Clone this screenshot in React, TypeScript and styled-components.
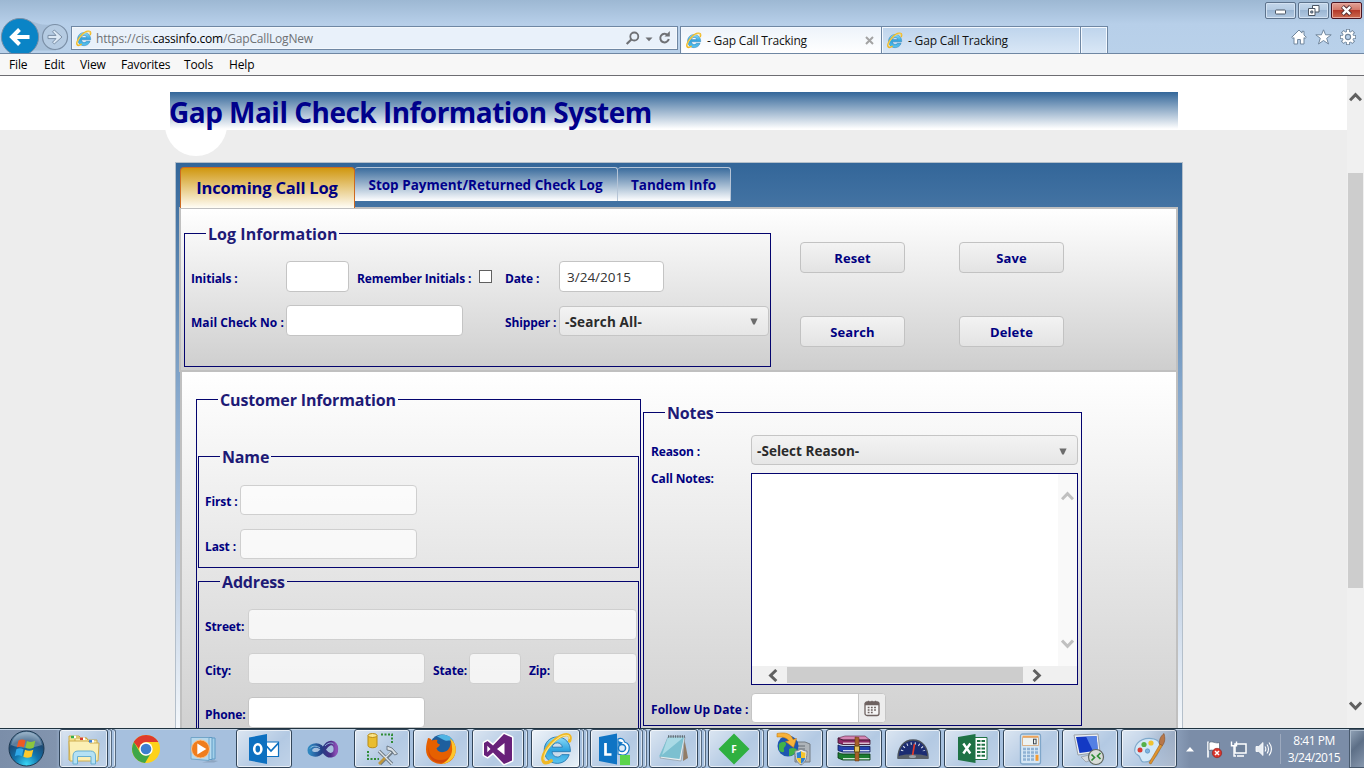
import React from "react";
import styled, { createGlobalStyle, css } from "styled-components";

const navy = "#000080";
const line = "#04046e";

const GlobalStyle = createGlobalStyle`
  *, *::before, *::after { box-sizing: border-box; }
  html, body { margin: 0; padding: 0; }
  body { font-family: "Open Sans", "Noto Sans", sans-serif; overflow: hidden; }
  svg { display: block; flex: none; }
  button, input { font-family: inherit; margin: 0; }
`;

/* ---------- window ---------- */

const Screen = styled.div`
  width: 1364px;
  height: 768px;
  display: flex;
  flex-direction: column;
  overflow: hidden;
  background: #fff;
`;

const Chrome = styled.header`
  position: relative;
  flex: none;
  height: 54px;
  display: flex;
  align-items: flex-end;
  border-bottom: 1px solid #6f87a3;
  background: linear-gradient(#9db8d3 0, #b7cfe9 24px, #b9d1ea 100%);
`;

const NavButtons = styled.div`
  width: 71px;
  height: 35px;
  flex: none;
`;

const AddressBar = styled.div`
  width: 607px;
  height: 24px;
  margin: 0 2px 3px 0;
  padding: 0 6px 0 3px;
  display: flex;
  align-items: center;
  border: 1px solid #6f87a3;
  background: #e9f1fa;
  box-shadow: inset 0 0 0 1px #f4f8fc;
`;

const Url = styled.span`
  flex: 1;
  margin-left: 4px;
  padding-top: 1px;
  font-size: 12px;
  letter-spacing: -0.18px;
  color: #6d7073;
  white-space: nowrap;
  b { font-weight: 400; color: #000; }
`;

const BrowserTab = styled.div<{ $active?: boolean; $w: number }>`
  width: ${(p) => p.$w}px;
  height: 27px;
  padding: 0 7px 0 4px;
  display: flex;
  align-items: center;
  gap: 5px;
  border: 1px solid #6f87a3;
  border-bottom: 0;
  margin-right: -1px;
  font-size: 12px;
  color: #111;
  white-space: nowrap;
  box-shadow: inset 1px 1px 0 #f4f9ff, inset -1px 0 0 #f4f9ff;
  background: ${(p) => (p.$active ? "linear-gradient(#edf3fa, #fff)" : "linear-gradient(#bed4ec, #d9e7f6)")};
  span { flex: 1; padding-top: 1px; letter-spacing: -0.18px; }
`;

const WindowControls = styled.div`
  position: absolute;
  right: 2px;
  top: 2px;
  display: flex;
  gap: 2px;
`;

const ControlButton = styled.div<{ $close?: boolean }>`
  width: 31px;
  height: 17px;
  display: grid;
  place-items: center;
  border: 1px solid ${(p) => (p.$close ? "#4a1420" : "#5d738c")};
  border-radius: 2px;
  box-shadow: inset 0 0 0 1px ${(p) => (p.$close ? "#e8aaa0" : "#d3e2f2")};
  background: ${(p) =>
    p.$close
      ? "linear-gradient(#e2a397 0, #d3796a 45%, #b5392a 50%, #cc6a50 100%)"
      : "linear-gradient(#c3d6ea 0, #b4cbe3 45%, #9bb6d3 50%, #b3cae2 100%)"};
`;

const ToolIcons = styled.div`
  position: absolute;
  right: 8px;
  top: 29px;
  display: flex;
  gap: 8px;
`;

const MenuBar = styled.nav`
  flex: none;
  height: 22px;
  padding: 1px 0 0 9px;
  display: flex;
  align-items: center;
  border-bottom: 1px solid #6d6d72;
  background: #f7f7f7;
`;

const MenuItem = styled.span<{ $w: number }>`
  width: ${(p) => p.$w}px;
  font-size: 12px;
  line-height: 18px;
  letter-spacing: -0.15px;
  color: #000;
  white-space: nowrap;
`;

const Viewport = styled.div`
  flex: 1;
  min-height: 0;
  display: flex;
`;

const Page = styled.main`
  width: 1347px;
  height: 652px;
  overflow: hidden;
  background: #ededed;
`;

const PageScroll = styled.div`
  width: 17px;
  padding: 15px 0 0;
  display: flex;
  flex-direction: column;
  align-items: center;
  background: #f0f0f0;
`;

const ScrollThumb = styled.div`
  width: 15px;
  height: 415px;
  flex: none;
  margin: 69px 0 111px;
  background: #cdcdcd;
`;

/* ---------- page ---------- */

const Banner = styled.div`
  position: relative;
  height: 54px;
  padding: 16px 0 0 170px;
  background: #fff;
  &::after {
    content: "";
    position: absolute;
    left: 165px;
    top: 18px;
    width: 62px;
    height: 62px;
    border-radius: 50%;
    background: #fff;
    clip-path: inset(36px 0 0 0);
  }
`;

const BannerTitle = styled.h1`
  width: 1008px;
  height: 37px;
  margin: 0;
  font-size: 28px;
  line-height: 41px;
  font-weight: 700;
  letter-spacing: -0.52px;
  text-indent: -1px;
  white-space: nowrap;
  color: #00008b;
  background: linear-gradient(#336699, #fff);
`;

const Shell = styled.div`
  width: 1008px;
  height: 640px;
  margin: 32px 0 0 175px;
  padding: 4px 4px 0 3px;
  border: 1px solid #b4bfca;
  background: linear-gradient(#336699 0, #4272a2 40px, #85a7cb 225px, #bccde3 400px, #f2f6fa 560px, #fff 600px);
`;

const TabStrip = styled.div`
  position: relative;
  z-index: 1;
  display: flex;
  align-items: flex-start;
  height: 40px;
  padding-left: 1px;
`;

const Tab = styled.div<{ $active?: boolean; $w: number }>`
  width: ${(p) => p.$w}px;
  height: 34px;
  padding-right: 1px;
  text-align: center;
  white-space: nowrap;
  font-weight: 700;
  font-size: 13.5px;
  line-height: 34px;
  color: #00008b;
  border: 1px solid #b5c4d6;
  border-left: 0;
  border-bottom: 0;
  border-radius: 3px 3px 0 0;
  background: linear-gradient(#3b6c9d, #fff);
  ${(p) =>
    p.$active &&
    css`
      height: 41px;
      line-height: 39px;
      font-size: 16.5px;
      letter-spacing: -0.18px;
      color: ${navy};
      border: 1px solid #cd6a20;
      border-bottom: 0;
      border-radius: 4px 4px 0 0;
      background: linear-gradient(#d0970f, #fffdf6);
    `}
`;

const LogPane = styled.section`
  height: 165px;
  padding: 12px 0 0 3px;
  display: flex;
  align-items: flex-start;
  border: 2px solid #c0c0c0;
  background: linear-gradient(#ffffff, #cecece);
`;

const DetailPane = styled.section`
  height: 420px;
  margin-left: 1px;
  padding: 15px 0 0 14px;
  display: flex;
  align-items: flex-start;
  border: solid #c0c0c0;
  border-width: 0 2px;
  background: linear-gradient(#ffffff, #cfcfcf 370px);
`;

const Group = styled.fieldset<{ $w: number; $h: number; $mt?: number }>`
  width: ${(p) => p.$w}px;
  height: ${(p) => p.$h}px;
  min-width: 0;
  margin: ${(p) => p.$mt || 0}px 0 0;
  padding: 0;
  border: 1px solid ${line};
`;

const Legend = styled.legend<{ $w: number; $ls?: number }>`
  width: ${(p) => p.$w}px;
  height: 25px;
  margin-left: 21px;
  padding: 0 2px;
  font-size: 16px;
  line-height: 26px;
  font-weight: 700;
  letter-spacing: ${(p) => p.$ls ?? -0.15}px;
  white-space: nowrap;
  color: #1e1a76;
`;

const Row = styled.div<{ $mt: number; $pl?: number }>`
  display: flex;
  align-items: center;
  margin-top: ${(p) => p.$mt}px;
  padding-left: ${(p) => p.$pl ?? 6}px;
`;

const Label = styled.label<{ $w: number; $up?: boolean; $ls?: number; $pt?: number }>`
  width: ${(p) => p.$w}px;
  flex: none;
  padding-top: ${(p) => p.$pt ?? 4}px;
  margin-top: ${(p) => (p.$up ? -6 : 0)}px;
  align-self: ${(p) => (p.$up ? "flex-start" : "center")};
  font-size: 12px;
  line-height: 16px;
  font-weight: 700;
  letter-spacing: ${(p) => p.$ls ?? -0.13}px;
  white-space: nowrap;
  color: ${navy};
`;

const TextBox = styled.div<{ $w: number; $mr?: number; $off?: boolean; $h?: number }>`
  width: ${(p) => p.$w}px;
  height: ${(p) => p.$h || 31}px;
  flex: none;
  margin-right: ${(p) => p.$mr || 0}px;
  padding: 0 7px;
  border: 1px solid ${(p) => (p.$off ? "#cfcfcf" : "#c4c4c4")};
  border-radius: 4px;
  background: ${(p) => (p.$off ? "rgba(255,255,255,.72)" : "#fff")};
  font-size: 13.5px;
  line-height: 30px;
  color: #333;
`;

const CheckBox = styled.div`
  width: 13px;
  height: 13px;
  margin-right: 13px;
  border: 1px solid #606060;
  background: #fff;
`;

const Select = styled.div<{ $w: number; $ls?: number }>`
  width: ${(p) => p.$w}px;
  height: 30px;
  padding: 2px 10px 0 5px;
  display: flex;
  align-items: center;
  justify-content: space-between;
  border: 1px solid #c5c5c5;
  border-radius: 4px;
  background: linear-gradient(#f3f3f3, #e6e6e6);
  font-size: 13.5px;
  font-weight: 700;
  letter-spacing: ${(p) => p.$ls ?? 0.05}px;
  color: #2a2a2a;
`;

const ButtonGrid = styled.div`
  display: grid;
  grid-template-columns: 105px 105px;
  gap: 43px 54px;
  margin: 21px 0 0 29px;
`;

const ActionButton = styled.button`
  height: 31px;
  padding: 1px 0 0;
  border: 1px solid #c2c2c2;
  border-radius: 4px;
  background: linear-gradient(#f3f3f3, #e3e3e3);
  font-size: 13px;
  letter-spacing: 0.1px;
  font-weight: 700;
  color: ${navy};
`;

const NotesArea = styled.div`
  width: 327px;
  height: 212px;
  display: grid;
  grid-template-columns: 1fr 19px;
  grid-template-rows: 1fr 18px;
  border: 1px solid ${line};
  background: #fff;
`;

const NotesVScroll = styled.div`
  display: flex;
  flex-direction: column;
  align-items: center;
  justify-content: space-between;
  padding: 16px 0;
  background: #f9f9f9;
`;

const NotesHScroll = styled.div`
  grid-column: 1 / 3;
  display: flex;
  align-items: center;
  gap: 7px;
  padding-left: 15px;
  background: #f0f0f0;
`;

const NotesThumb = styled.div`
  width: 236px;
  height: 16px;
  background: #cdcdcd;
`;

const DateField = styled.div`
  display: flex;
  width: 135px;
  height: 30px;
  border: 1px solid #c5c5c5;
  border-radius: 4px;
  overflow: hidden;
  background: #fff;
`;

const DateButton = styled.div`
  width: 27px;
  margin-left: auto;
  display: grid;
  place-items: center;
  border-left: 1px solid #c5c5c5;
  background: #ededed;
`;

/* ---------- taskbar ---------- */

const Taskbar = styled.footer`
  flex: none;
  height: 40px;
  display: flex;
  border-top: 1px solid #1f3340;
  box-shadow: inset 0 1px 0 #c3d4e6;
  background: linear-gradient(90deg, #7b8ea9 0, #8294ae 56px, #a6c0de 64px, #a6c0de 1140px, #8a9db8 1176px, #7b8da8 1190px, #7b8da8 100%);
`;

const StartCell = styled.div`
  width: 59px;
  flex: none;
  padding-left: 8px;
`;

type CellKind = "plain" | "open" | "stack" | "pile" | "active";

const frontWidth: Record<CellKind, number> = { plain: 56, open: 56, stack: 52, pile: 49, active: 49 };
const edgeCount: Record<CellKind, number> = { plain: 0, open: 0, stack: 1, pile: 2, active: 2 };

const TaskCell = styled.div`
  width: 59px;
  height: 39px;
  flex: none;
  display: flex;
`;

const TaskButton = styled.div<{ $kind: CellKind }>`
  width: ${(p) => frontWidth[p.$kind]}px;
  height: 39px;
  display: grid;
  place-items: center;
  border: 1px solid transparent;
  border-radius: 3px;
  ${(p) =>
    p.$kind !== "plain" &&
    css`
      border-color: #33465a;
      box-shadow: inset 0 0 0 1px rgba(255, 255, 255, 0.65);
      background: linear-gradient(135deg, rgba(255, 255, 255, 0.6), rgba(255, 255, 255, 0.15) 60%, rgba(255, 255, 255, 0.3));
    `}
  ${(p) =>
    p.$kind === "active" &&
    css`
      background: linear-gradient(135deg, #eef4fa, #c9d9ea 55%, #e8f2f8);
    `}
`;

const StackEdge = styled.div`
  width: 4px;
  height: 39px;
  border: 1px solid #566a80;
  border-left: 0;
  border-radius: 0 3px 3px 0;
  box-shadow: inset -1px 0 0 rgba(255, 255, 255, 0.6);
`;

const Tray = styled.div`
  margin-left: 4px;
  padding-left: 2px;
  flex: 1;
  display: flex;
  align-items: center;
  color: #fff;
`;

const TrayDivider = styled.div`
  width: 1px;
  height: 30px;
  margin-left: 4px;
  background: rgba(255, 255, 255, 0.25);
`;

const Clock = styled.div`
  width: 66px;
  padding-top: 1px;
  font-size: 12px;
  line-height: 17px;
  letter-spacing: -0.5px;
  text-align: center;
  white-space: nowrap;
`;

const ShowDesktop = styled.div`
  width: 15px;
  height: 39px;
  flex: none;
  margin-left: auto;
  border: 1px solid #48596d;
  border-right: 0;
  box-shadow: inset 1px 1px 0 #a9b8c9;
  background: linear-gradient(135deg, #93a4b8, #5d6f87 45%, #8798ae);
`;

/* ---------- drawings ---------- */

const IeLogo = ({ size, id }: { size: number; id: string }) => (
  <svg width={size} height={size} viewBox="0 0 32 32">
    <defs>
      <linearGradient id={id} x1="0" y1="0" x2="0" y2="1">
        <stop offset="0" stopColor="#8ddcf8" />
        <stop offset=".5" stopColor="#2fa3de" />
        <stop offset="1" stopColor="#5cc4ee" />
      </linearGradient>
    </defs>
    <path
      d="M29.500 18.500H12.200c.3 3 2.300 5 5 5 1.900 0 3.300-.8 4.200-2.200h7c-1.600 5.200-6.200 8.200-11.300 8.200-7 0-12.200-5.200-12.200-12.300S10.100 4.700 17.100 4.700c7.300 0 12.800 5.400 12.400 13.800zM22 14.300c-.4-2.500-2.300-4.100-4.800-4.100s-4.400 1.600-4.900 4.100H22z"
      fill={`url(#${id})`}
      stroke="#2a7db4"
      strokeWidth=".9"
    />
    <path
      d="M28.800 8.500c1-3 .6-5-1.300-5.700-3.600-1.300-11 2.300-16.600 8.400C4.900 17.700 2 25.300 4.400 28.100c1.300 1.500 4 .9 7.100-1"
      fill="none"
      stroke="#f0b823"
      strokeWidth="3"
      strokeLinecap="round"
    />
    <path d="M28.400 6.500c.4-1.800 0-2.700-1.100-3.100-3.400-1.200-9.500 2-15 7.500-5 5.300-8 11-7.600 15" fill="none" stroke="#fce78b" strokeWidth="1" />
  </svg>
);

const BackForward = () => (
  <svg width="71" height="35" viewBox="0 19 71 35">
    <path d="M20 19.500C32 20 36 27 50 25.500h6v26H20z" fill="#a2bad3" opacity=".75" />
    <circle cx="20" cy="38" r="18.600" fill="#0a84c6" stroke="#7890a8" strokeWidth="1" />
    <path d="M29.500 38H13M19.500 30.500 12 38l7.500 7.500" fill="none" stroke="#fff" strokeWidth="4" />
    <circle cx="55" cy="38" r="12.500" fill="#b5cbe2" stroke="#7b8fa6" strokeWidth="1.200" />
    <path
      d="M48 36.400h8l-3.500-3.600 1.800-1.800L62 38l-7.700 7-1.800-1.800 3.500-3.600h-8z"
      fill="#dce8f4"
      stroke="#7b8fa6"
      strokeWidth="1"
    />
  </svg>
);

const AddressTools = () => (
  <svg width="46" height="18" viewBox="0 0 46 18">
    <circle cx="9.300" cy="7.500" r="4" fill="none" stroke="#6f7175" strokeWidth="1.800" />
    <path d="M6.300 10.500 1.700 15" stroke="#6f7175" strokeWidth="2.200" />
    <path d="M20.500 8.500h7L24 12.300z" fill="#6f7175" />
    <path d="M42.800 6.200A4.300 4.300 0 1 0 43.800 10" fill="none" stroke="#6f7175" strokeWidth="2" />
    <path d="M39.500 7.400h5.300V2z" fill="#6f7175" />
  </svg>
);

const HomeStarGear = () => (
  <ToolIcons>
    <svg width="16" height="16" viewBox="0 0 16 16">
      <path
        d="M8 1 .7 8.300l1.300 1.200 1-.9V15h3.600v-4.500h2.800V15H13V8.600l1 .9 1.300-1.200-2.300-2.300V2.300h-2v1.800z"
        fill="#fff"
        stroke="#70869d"
        strokeWidth="1"
      />
    </svg>
    <svg width="17" height="16" viewBox="0 0 17 16">
      <path
        d="m8.500.8 2.100 5h5.600L11.700 9.300l1.800 5.700-5-3.500-5 3.500 1.800-5.700L.8 5.800h5.600z"
        fill="#fff"
        stroke="#70869d"
        strokeWidth="1"
      />
    </svg>
    <svg width="16" height="16" viewBox="0 0 16 16">
      <g stroke="#70869d" strokeWidth="4">
        <path d="M8 0v16M0 8h16M2.300 2.300l11.400 11.400M13.700 2.300 2.300 13.700" />
      </g>
      <circle cx="8" cy="8" r="5.900" fill="#70869d" />
      <g stroke="#fff" strokeWidth="2.300">
        <path d="M8 .8v14.400M.8 8h14.400M2.900 2.900l10.200 10.200M13.100 2.900 2.900 13.100" />
      </g>
      <circle cx="8" cy="8" r="5.200" fill="#fff" />
      <circle cx="8" cy="8" r="2.600" fill="#b9d1ea" stroke="#70869d" strokeWidth="1.100" />
    </svg>
  </ToolIcons>
);

const Chevron = ({ dir, color = "#606060" }: { dir: "up" | "down" | "left" | "right"; color?: string }) => {
  const paths = {
    up: "M1 9.300 6.500 3.600 12 9.300",
    down: "M1 3.600 6.500 9.300 12 3.600",
    left: "M9.300 1 3.600 6.500 9.300 12",
    right: "M3.600 1 9.300 6.500 3.600 12",
  };
  return (
    <svg width="13" height="13" viewBox="0 0 13 13">
      <path d={paths[dir]} fill="none" stroke={color} strokeWidth="3" />
    </svg>
  );
};

const SelectArrow = () => (
  <svg width="8" height="7" viewBox="0 0 8 7">
    <path d="M.4.500h7.200L4.800 6.500H3.200z" fill="#6c6c6c" />
  </svg>
);

const CalendarIcon = () => (
  <svg width="16" height="17" viewBox="0 0 16 17">
    <path d="M3 2h10a2 2 0 0 1 2 2v9.500a2 2 0 0 1-2 2H3a2 2 0 0 1-2-2V4a2 2 0 0 1 2-2z" fill="#f5f5f5" stroke="#6e6260" strokeWidth="1.300" />
    <path d="M1 5.200h14V3.500L13.500 2h-11L1 3.500z" fill="#6e6260" />
    <path d="M4.500.7v2.600M8 .7v2.600M11.500.7v2.600" stroke="#6e6260" strokeWidth="1.300" />
    <path d="M3.700 7.500h9M3.700 10h9M3.700 12.500h6" stroke="#6e6260" strokeWidth="1.600" strokeDasharray="1.800 1.400" />
  </svg>
);

const StartOrb = () => (
  <svg width="37" height="38" viewBox="0 0 37 38">
    <defs>
      <radialGradient id="orb" cx=".5" cy=".95" r=".9">
        <stop offset="0" stopColor="#39d6f5" />
        <stop offset=".4" stopColor="#1274ad" />
        <stop offset=".75" stopColor="#1c4a75" />
        <stop offset="1" stopColor="#6f92b0" />
      </radialGradient>
    </defs>
    <circle cx="18.500" cy="19.500" r="17.500" fill="url(#orb)" stroke="#1d3850" strokeWidth="1" />
    <path d="M3 16C5 8 11 3 18.500 3S32 8 34 16c-8 3-22 4-31 0z" fill="#fff" opacity=".28" />
    <path d="M10.500 11.500c2.300-1.300 4.700-1.400 7-.1l-1.600 7c-2.400-1.300-4.800-1.200-7.100 0z" fill="#ee5a24" />
    <path d="M19 12c2.700 1.200 5.300 1.200 8.300-.2l-1.700 7c-2.900 1.300-5.500 1.300-8.200 0z" fill="#8cc63e" />
    <path d="M8.400 20.200c2.300-1.200 4.700-1.200 7.100.1l-1.700 7c-2.300-1.300-4.600-1.300-7-.1z" fill="#2fa8e8" />
    <path d="M17 20.800c2.800 1.300 5.400 1.300 8.300 0l-1.700 7c-2.900 1.300-5.600 1.300-8.300-.1z" fill="#fdc92c" />
  </svg>
);

const ExplorerIcon = () => (
  <svg width="34" height="32" viewBox="0 0 34 32">
    <path d="M2 3h10l2 2h6v22H2z" fill="#f6e089" stroke="#c9a94a" />
    <path d="M8 5h11l2 2h9v20H8z" fill="#f9e9a2" stroke="#c9a94a" />
    <path d="M2 8h19l2 2h9l-1 18H3z" fill="#fbefb4" stroke="#cfae50" />
    <path d="M4 4h5M13 5.800h5M22 8.300h5" stroke="#fff" strokeWidth="2.500" />
    <path d="M4 4h3" stroke="#35b04a" strokeWidth="2.500" />
    <path d="M13 5.800h3" stroke="#d63b2d" strokeWidth="2.500" />
    <path d="M22 8.300h3" stroke="#3a7fd0" strokeWidth="2.500" />
    <path d="M6 31v-8c0-3.500 2-5 5-5h12.500c3 0 5 1.500 5 5v8H24v-7.500H10.500V31z" fill="#b4e1f4" stroke="#66aed1" />
  </svg>
);

const ChromeIcon = () => (
  <svg width="30" height="30" viewBox="0 0 30 30">
    <circle cx="15" cy="15" r="14" fill="#fdd21b" />
    <path d="M2.900 8A14 14 0 0 1 27.200 8H15a7 7 0 0 0-6.500 4.700z" fill="#df3b2c" />
    <path d="M2.900 8A14 14 0 0 0 14 29l6.100-10.200A7 7 0 0 1 9 18.500z" fill="#3fa648" />
    <path d="M2.900 8c3-5.500 18-9.500 24.300 0H15c-4 0-6.800 3.300-7 7z" fill="#df3b2c" />
    <circle cx="15" cy="15" r="6.700" fill="#fff" />
    <circle cx="15" cy="15" r="5.300" fill="#3c7fcf" />
  </svg>
);

const MediaIcon = () => (
  <svg width="30" height="28" viewBox="0 0 30 28">
    <path d="m22 25 6 1-4 1.500H12z" fill="#7e95ad" opacity=".6" />
    <path d="M12 3h13v21H12z" fill="#a2d0ea" stroke="#5f9ac4" />
    <path d="M9 2.500h13v22H9z" fill="#b7dcf0" stroke="#5f9ac4" />
    <path d="M1 2.500h18v23L1 24z" fill="#b6d8ec" stroke="#72a5c8" />
    <circle cx="10.500" cy="14" r="9" fill="#f07d1c" stroke="#f9c088" />
    <path d="M7.300 8.500v11l9-5.500z" fill="#fff" />
  </svg>
);

const FiddlerLetter = styled.text`
  font-family: "Open Sans", sans-serif;
  font-weight: 700;
  fill: #fff;
`;

const OutlookIcon = () => (
  <svg width="32" height="32" viewBox="0 0 32 32">
    <path d="M17 9h13.500v14.500H17z" fill="#fff" stroke="#0d70c0" strokeWidth="1.200" />
    <path d="m17.500 12 5.500 6 7.500-8" fill="none" stroke="#0d70c0" strokeWidth="1.800" />
    <path d="M1 4.500 19 1v30L1 27.500z" fill="#0d70c0" />
    <ellipse cx="9.800" cy="16" rx="3.600" ry="4.700" fill="none" stroke="#fff" strokeWidth="2.600" />
  </svg>
);

const InfinityIcon = () => (
  <svg width="32" height="20" viewBox="0 0 32 20">
    <defs>
      <linearGradient id="inf">
        <stop offset="0" stopColor="#2f86bf" />
        <stop offset=".45" stopColor="#243f86" />
        <stop offset=".8" stopColor="#4a2c86" />
        <stop offset="1" stopColor="#8a4fb5" />
      </linearGradient>
    </defs>
    <path
      d="M13.500 8C9.500 5 2.800 7 2.800 11.300s7.200 6 11.700 1.200S20.500 3.500 24.500 4c5.500.8 6 10.500.5 12-3.500 1-6-1.500-7.500-3.500"
      fill="none"
      stroke="url(#inf)"
      strokeWidth="4.600"
      strokeLinecap="round"
    />
    <path d="M3 9.500C5 6.500 10 6.500 13 9M18 7c2-2.500 6-4.200 8.500-2" fill="none" stroke="#9fd0ee" strokeWidth=".8" />
  </svg>
);

const SqlIcon = () => (
  <svg width="32" height="33" viewBox="0 0 32 33">
    <path d="M2 3.500v10c0 3 9 3 9 0v-10z" fill="#e9bd2f" stroke="#b98b13" />
    <ellipse cx="6.500" cy="3.500" rx="4.500" ry="2" fill="#fbe58a" stroke="#b98b13" />
    <path d="M15 2.500h11v10M2 19v8h11" fill="none" stroke="#2f8c35" strokeWidth="2" strokeDasharray="2 1.500" />
    <path d="m13 19 13 13M27 19 14 32" stroke="#6f7c87" strokeWidth="3.400" />
    <path d="m13 19 13 13M25 20 14 31" stroke="#dfe5ea" strokeWidth="1.400" />
    <path d="m21 14 5 2 5.500 6-3 1-3-4-4.500-1z" fill="#dbe1e6" stroke="#59646e" strokeWidth=".8" />
    <path d="m13 32 6-6" stroke="#c0973b" strokeWidth="2.600" />
  </svg>
);

const FirefoxIcon = () => (
  <svg width="32" height="32" viewBox="0 0 32 32">
    <circle cx="17" cy="14" r="12.500" fill="#1e5f9e" />
    <path d="M12 3.500c6-4 14-1 17 5-4-2-6 0-9-1s-5-3-8-4z" fill="#4fb4e4" />
    <path
      d="M3 5c2 0 3 1 4 2.500C9 6.500 11 6.500 12.500 7c-1 2-.5 3.500 2.500 4.500-.5 2-2.500 2.500-3.500 4 1.500 4 6.500 4.500 10 2.500 4-2.300 5-9 3.500-12.500 5 3.500 6.500 9 5.500 14C29 27 23 31 16 31 7.500 31 1 24.500 1 16.500 1 12 2 9 3 5z"
      fill="#e66000"
    />
    <path d="M25 5.500c5 3.500 6.500 9 5.500 14C29 26 24 30 17 31c7-4 11-10 10-17 0-3-1-6-2-8.500z" fill="#fcc62d" />
    <path d="M4 14c-1 7 4 13 11 13 4 0 7-1 9-3-2 5-8 7-13 5C5 27 2 20 4 14z" fill="#c7380f" opacity=".6" />
  </svg>
);

const VisualStudioIcon = () => (
  <svg width="34" height="34" viewBox="0 0 34 34">
    <path d="m3 11 3.500-2 5.500 4.500L23 2l8 3.500v23L23 32 12 20.500 6.500 25 3 23z" fill="#68217a" stroke="#fff" strokeWidth="3" strokeLinejoin="round" paintOrder="stroke" />
    <path d="m6.300 13.800 3.200 3.200-3.200 3.200zM23.500 11v12L16 17z" fill="#fff" />
  </svg>
);

const LyncIcon = () => (
  <svg width="33" height="34" viewBox="0 0 33 34">
    <path d="M20 7c3-1.500 6 0 6.500 3 4 1 5.500 4.500 4.500 8s-4 5.500-7 5l-4-1z" fill="#fff" stroke="#1578c5" strokeWidth="1.200" />
    <circle cx="24" cy="16" r="3.600" fill="#dcebf8" stroke="#1578c5" strokeWidth="1.500" />
    <path d="m20 9 5 1.500-4 4z" fill="#1578c5" />
    <path d="M1 5 19 1.500v31L1 29z" fill="#0f74c4" />
    <path d="M7.500 11v11.500h6" fill="none" stroke="#fff" strokeWidth="2.700" />
    <path d="M22 23h10v10H22z" fill="#5bd44c" />
  </svg>
);

const NotepadIcon = () => (
  <svg width="34" height="32" viewBox="0 0 34 32">
    <path d="m27 4 4 21-5 3z" fill="#927c66" />
    <path d="M11 4h17l-4 24-21-3z" fill="#e9eef0" stroke="#8c9aa3" strokeWidth=".7" />
    <path d="M11 4h16l-4.500 22L2 23.500z" fill="#7cc0d0" />
    <path d="M11 4h16L5 22z" fill="#bde6ee" opacity=".7" />
    <path d="M11 3.500h17" stroke="#5f6c74" strokeWidth="2.500" strokeDasharray="1.300 1" />
  </svg>
);

const FiddlerIcon = () => (
  <svg width="34" height="34" viewBox="0 0 34 34">
    <path d="m17 1.500 15.500 15.500L17 32.500 1.500 17z" fill="#2fb040" />
    <FiddlerLetter x="14.200" y="20.500" fontSize="10">F</FiddlerLetter>
  </svg>
);

const ServerShieldIcon = () => (
  <svg width="40" height="34" viewBox="0 0 40 34">
    <path d="M20 10h10l5 2v18H20z" fill="#aeb4b9" stroke="#747c83" />
    <path d="M22 14h8M22 17h8M22 20h8" stroke="#656d74" />
    <circle cx="13" cy="14" r="10.500" fill="#1d56b0" />
    <path d="M4 12c3-3 7-3 7 0s-3 3-2 6-3 3-5 0zM14 17c3-2 7-1 8 1-2 4-5 6-8 6z" fill="#41b249" />
    <path d="M2 1.500c8-1.500 14 0 16 6l3.500-1-3 9-8-6 3.500-.8C12 6 8 4.500 2 5z" fill="#f7b23a" stroke="#c77c10" strokeWidth=".6" />
    <path d="M20 19c3 0 4-1 6-2 2 1 3 2 6 2 0 7-1 11-6 14-5-3-6-7-6-14z" fill="#e8e9eb" stroke="#7d8389" />
    <path d="M21.500 20.500c2 0 3-.5 4.500-1.500v7h-4.200zM26 26h4.200c-.6 3-2 4.500-4.200 5.700z" fill="#2e7fd0" />
    <path d="M30.500 20.500c-2 0-3-.5-4.500-1.500v7h4.200zM26 26h-4.200c.6 3 2 4.500 4.200 5.700z" fill="#f6c52c" />
  </svg>
);

const WinrarIcon = () => (
  <svg width="34" height="28" viewBox="0 0 34 28">
    <path d="M1 3 8 1h20l5 4H6z" fill="#d487b4" stroke="#5d1f42" strokeWidth=".6" />
    <path d="M1 3c2 1 3 1.500 5 2h27v4.500H6C4 9 2.500 8.500 1 8z" fill="#8d2a66" stroke="#3a1229" strokeWidth=".8" />
    <path d="M6 8.200h26.500" stroke="#efe6ec" strokeWidth="1.200" />
    <path d="M1 10c2 1 3 1 5 1.500h27V17H6c-2-.5-3.500-1-5-1.500z" fill="#2342ae" stroke="#0d1a50" strokeWidth=".8" />
    <path d="M6 15.700h26.500" stroke="#e6eaf6" strokeWidth="1.200" />
    <path d="M1 17.500c2 1 3 1.200 5 1.500h27v6H6c-2-.5-3.500-1.500-5-2z" fill="#1c7d30" stroke="#0a3312" strokeWidth=".8" />
    <path d="M6 23.700h26.500" stroke="#e2f0e4" strokeWidth="1.200" />
    <path d="m18 2 4 .5V26h-4z" fill="#a8622a" stroke="#5e3512" strokeWidth=".5" />
    <path d="M17.500 11h5v6h-5z" fill="#e2c15c" stroke="#5e4a14" />
  </svg>
);

const GaugeIcon = () => (
  <svg width="32" height="22" viewBox="0 0 32 22">
    <path d="M1 20C1 9 7 2 16 2s15 7 15 18z" fill="#1b2c72" stroke="#4a525c" strokeWidth="1.500" />
    <path d="M1 18.500c5-3 25-3 30 0V21H1z" fill="#59616a" />
    <path d="M5 13c2.500-10 19.500-10 22 0" fill="none" stroke="#dfe6f2" strokeWidth="2.500" strokeDasharray="1 3" />
    <path d="m15.500 18 2-12" stroke="#e83a2a" strokeWidth="1.600" />
    <ellipse cx="15.500" cy="18.500" rx="3.500" ry="1.500" fill="#98a0a8" />
  </svg>
);

const ExcelIcon = () => (
  <svg width="31" height="31" viewBox="0 0 31 31">
    <path d="M17 4.500h13v22H17z" fill="#fff" stroke="#1f7245" strokeWidth="1" />
    <path d="M20 8h8M20 11.700h8M20 15.400h8M20 19.100h8M20 22.800h8" stroke="#1f7245" strokeWidth="2" strokeDasharray="3.500 1" />
    <path d="M1 4 18.500 1v29L1 27z" fill="#1f7245" />
    <path d="m6.300 10.500 7 10M13.300 10.500l-7 10" stroke="#fff" strokeWidth="2.400" />
  </svg>
);

const CalcIcon = () => (
  <svg width="24" height="32" viewBox="0 0 24 32">
    <rect x="1.500" y="1" width="20" height="30" rx="2" fill="#d6e7f5" stroke="#7fa6c9" strokeWidth="1.300" />
    <path d="M3.500 3.500h16" stroke="#f2a558" strokeWidth="1.600" />
    <path d="M3.500 4.500h16v8h-16z" fill="#eef3f2" stroke="#d99a5a" strokeWidth=".7" />
    <rect x="14.500" y="6.200" width="2.600" height="4.600" fill="none" stroke="#3f4850" strokeWidth="1" />
    <path d="M4 16h15M4 19.500h15M4 23h11M4 26.500h11" stroke="#8fb2d4" strokeWidth="2.400" strokeDasharray="3 1" />
    <path d="M16.500 21.800h3v6h-3z" fill="#f39a31" />
  </svg>
);

const RemoteIcon = () => (
  <svg width="36" height="34" viewBox="0 0 36 34">
    <path d="m2 3 24-1 2 18-22 3z" fill="#eceff2" stroke="#99a1a9" />
    <path d="m4 5 20.500-1 1.500 14.500L7.500 21z" fill="#1339c4" />
    <path d="m14 4.500 10.500-.5 1.500 14.500-5 .5z" fill="#6f9ef2" opacity=".7" />
    <path d="m9 25 12-3 3 4-10 4z" fill="#d7dbe0" stroke="#8f979f" strokeWidth=".7" />
    <circle cx="24" cy="25" r="7.500" fill="#d9ddd9" stroke="#5f665f" strokeWidth="1.200" />
    <path d="m19.500 22.500 3 3-3 3M28.500 21l-3 3 3 3" fill="none" stroke="#2f8c35" strokeWidth="1.700" />
  </svg>
);

const PaintIcon = () => (
  <svg width="35" height="34" viewBox="0 0 35 34">
    <path d="M3 16C5 8 14 5 22 7c6 1.500 7 7 5 12-2 6-8 11-15 11-4 0-3-4-5-6S1.500 22 3 16z" fill="#d3e8f7" stroke="#7fa9cb" strokeWidth="1.200" />
    <circle cx="8" cy="18" r="2.500" fill="#d93c33" />
    <circle cx="12" cy="12.500" r="2.600" fill="#55b04a" />
    <circle cx="19" cy="11" r="2.600" fill="#f0c22f" />
    <circle cx="15.500" cy="19" r="2.200" fill="#7fb5e0" stroke="#4b86b8" strokeWidth=".6" />
    <path d="m17 31 11-19 2.500 1.500L19 32z" fill="#e0942d" stroke="#a5661b" strokeWidth=".6" />
    <path d="M27.500 12C27 7 29 4 32 1.500c1 4 1.500 8-1.500 12z" fill="#b7774a" stroke="#85532e" strokeWidth=".6" />
  </svg>
);

const TrayIcons = () => (
  <svg width="90" height="22" viewBox="0 0 90 22">
    <path d="m0 13.500 4-4.500 4 4.500z" fill="#fff" />
    <path d="M22 3.500v16" stroke="#fff" strokeWidth="1.600" />
    <path d="M23 4.500c4-2 6 1.500 10.500 0v8c-4 1.500-6.500-1.500-10.500 0z" fill="#fff" stroke="#4f5f73" strokeWidth=".7" />
    <circle cx="31" cy="15" r="4.700" fill="#d8342b" stroke="#8f1c17" strokeWidth=".6" />
    <path d="m29 13 4 4M33 13l-4 4" stroke="#fff" strokeWidth="1.500" />
    <path d="M49 6h11v9H49zM51 18h7" fill="#6f819a" stroke="#fff" strokeWidth="1.500" />
    <path d="M45.500 3.500v4.200h5V3.500M48 8v10h2" fill="none" stroke="#fff" strokeWidth="1.400" />
    <path d="M70 8.500h2.800L77 4.500v13l-4.200-4H70z" fill="#e8edf3" stroke="#fff" strokeWidth=".8" />
    <path d="M79 8.500c1 1.500 1 3.500 0 5M81 6.500c2 2.500 2 6.500 0 9M83 4.500c3 4 3 9 0 13" fill="none" stroke="#fff" strokeWidth="1.100" />
  </svg>
);

/* ---------- data ---------- */

const menus: [string, number][] = [
  ["File", 35], ["Edit", 36], ["View", 41], ["Favorites", 63], ["Tools", 45], ["Help", 40],
];

const tasks: [CellKind, React.ReactNode][] = [
  ["pile", <ExplorerIcon />],
  ["plain", <ChromeIcon />],
  ["plain", <MediaIcon />],
  ["open", <OutlookIcon />],
  ["plain", <InfinityIcon />],
  ["open", <SqlIcon />],
  ["open", <FirefoxIcon />],
  ["stack", <VisualStudioIcon />],
  ["active", <IeLogo size={34} id="ieTask" />],
  ["pile", <LyncIcon />],
  ["pile", <NotepadIcon />],
  ["stack", <FiddlerIcon />],
  ["open", <ServerShieldIcon />],
  ["open", <WinrarIcon />],
  ["open", <GaugeIcon />],
  ["open", <ExcelIcon />],
  ["open", <CalcIcon />],
  ["open", <RemoteIcon />],
  ["open", <PaintIcon />],
];

export default function App() {
  return (
    <Screen>
      <GlobalStyle />
      <Chrome>
        <NavButtons><BackForward /></NavButtons>
        <AddressBar>
          <IeLogo size={17} id="ieAddr" />
          <Url>https://cis.<b>cassinfo.com</b>/GapCallLogNew</Url>
          <AddressTools />
        </AddressBar>
        <BrowserTab $active $w={202}>
          <IeLogo size={17} id="ieTab1" />
          <span>- Gap Call Tracking</span>
          <svg width="9" height="9" viewBox="0 0 9 9">
            <path d="m1 1 7 7M8 1 1 8" stroke="#a3a3a3" strokeWidth="2" />
          </svg>
        </BrowserTab>
        <BrowserTab $w={200}>
          <IeLogo size={17} id="ieTab2" />
          <span>- Gap Call Tracking</span>
        </BrowserTab>
        <BrowserTab $w={28} />
        <WindowControls>
          <ControlButton>
            <svg width="13" height="13" viewBox="0 0 13 13">
              <rect x="1.500" y="6" width="10" height="4" rx=".8" fill="#fff" stroke="#4b5664" />
            </svg>
          </ControlButton>
          <ControlButton>
            <svg width="13" height="13" viewBox="0 0 13 13">
              <path d="M5.500 1.500H12v6.500H5.500z" fill="#fff" stroke="#4b5664" />
              <path d="M1.500 4.500H8v7H1.500z" fill="#fff" stroke="#4b5664" />
              <path d="M3.800 7h2v2h-2z" fill="#9bb6d3" stroke="#4b5664" strokeWidth="1" />
            </svg>
          </ControlButton>
          <ControlButton $close>
            <svg width="13" height="11" viewBox="0 0 13 11">
              <path d="m2.500 1.500 8 8M10.500 1.500l-8 8" stroke="#4d2a2e" strokeWidth="4.200" />
              <path d="m2.800 1.800 7.400 7.400M10.200 1.800 2.800 9.200" stroke="#fff" strokeWidth="2.400" />
            </svg>
          </ControlButton>
        </WindowControls>
        <HomeStarGear />
      </Chrome>
      <MenuBar>
        {menus.map(([name, w]) => <MenuItem key={name} $w={w}>{name}</MenuItem>)}
      </MenuBar>

      <Viewport>
        <Page>
          <Banner><BannerTitle>Gap Mail Check Information System</BannerTitle></Banner>
          <Shell>
            <TabStrip>
              <Tab $active $w={175}>Incoming Call Log</Tab>
              <Tab $w={263}>Stop Payment/Returned Check Log</Tab>
              <Tab $w={113}>Tandem Info</Tab>
            </TabStrip>
            <LogPane>
              <Group $w={587} $h={146}>
                <Legend $w={133} $ls={0.04}>Log Information</Legend>
                <Row $mt={15}>
                  <Label $w={95}>Initials :</Label>
                  <TextBox $w={63} $mr={8} />
                  <Label $w={122}>Remember Initials :</Label>
                  <CheckBox />
                  <Label $w={54}>Date :</Label>
                  <TextBox $w={105}>3/24/2015</TextBox>
                </Row>
                <Row $mt={13}>
                  <Label $w={95} $ls={0.06}>Mail Check No :</Label>
                  <TextBox $w={177} $mr={42} />
                  <Label $w={54}>Shipper :</Label>
                  <Select $w={210} $ls={0.15}>-Search All-<SelectArrow /></Select>
                </Row>
              </Group>
              <ButtonGrid>
                {["Reset", "Save", "Search", "Delete"].map((t) => <ActionButton key={t}>{t}</ActionButton>)}
              </ButtonGrid>
            </LogPane>
            <DetailPane>
              <Group $w={445} $h={420}>
                <Legend $w={180}>Customer Information</Legend>
                <Row $mt={32} $pl={1}>
                  <Group $w={441} $h={124}>
                    <Legend $w={51}>Name</Legend>
                    <Row $mt={16}>
                      <Label $w={35}>First :</Label>
                      <TextBox $w={177} $h={30} $off />
                    </Row>
                    <Row $mt={14}>
                      <Label $w={35} $pt={6}>Last :</Label>
                      <TextBox $w={177} $h={30} $off />
                    </Row>
                  </Group>
                </Row>
                <Row $mt={1} $pl={1}>
                  <Group $w={441} $h={220}>
                    <Legend $w={67}>Address</Legend>
                    <Row $mt={15}>
                      <Label $w={43}>Street:</Label>
                      <TextBox $w={389} $off />
                    </Row>
                    <Row $mt={13}>
                      <Label $w={43}>City:</Label>
                      <TextBox $w={177} $mr={8} $off />
                      <Label $w={36}>State:</Label>
                      <TextBox $w={52} $mr={8} $off />
                      <Label $w={24}>Zip:</Label>
                      <TextBox $w={84} $off />
                    </Row>
                    <Row $mt={13}>
                      <Label $w={43}>Phone:</Label>
                      <TextBox $w={177} />
                    </Row>
                  </Group>
                </Row>
              </Group>
              <Row $mt={13} $pl={2}>
                <Group $w={439} $h={326}>
                  <Legend $w={51}>Notes</Legend>
                  <Row $mt={10} $pl={7}>
                    <Label $w={100}>Reason :</Label>
                    <Select $w={327}>-Select Reason-<SelectArrow /></Select>
                  </Row>
                  <Row $mt={8} $pl={7}>
                    <Label $w={100} $up>Call Notes:</Label>
                    <NotesArea>
                      <div />
                      <NotesVScroll>
                        <Chevron dir="up" color="#c0c0c0" />
                        <Chevron dir="down" color="#c0c0c0" />
                      </NotesVScroll>
                      <NotesHScroll>
                        <Chevron dir="left" />
                        <NotesThumb />
                        <Chevron dir="right" />
                      </NotesHScroll>
                    </NotesArea>
                  </Row>
                  <Row $mt={8} $pl={7}>
                    <Label $w={100} $ls={0.04}>Follow Up Date :</Label>
                    <DateField><DateButton><CalendarIcon /></DateButton></DateField>
                  </Row>
                </Group>
              </Row>
            </DetailPane>
          </Shell>
        </Page>
        <PageScroll>
          <Chevron dir="up" />
          <ScrollThumb />
          <Chevron dir="down" />
        </PageScroll>
      </Viewport>

      <Taskbar>
        <StartCell><StartOrb /></StartCell>
        {tasks.map(([kind, icon], i) => (
          <TaskCell key={i}>
            <TaskButton $kind={kind}>{icon}</TaskButton>
            {Array.from({ length: edgeCount[kind] }, (_, n) => <StackEdge key={n} />)}
          </TaskCell>
        ))}
        <Tray>
          <TrayIcons />
          <TrayDivider />
          <Clock>8:41 PM<br />3/24/2015</Clock>
          <ShowDesktop />
        </Tray>
      </Taskbar>
    </Screen>
  );
}
